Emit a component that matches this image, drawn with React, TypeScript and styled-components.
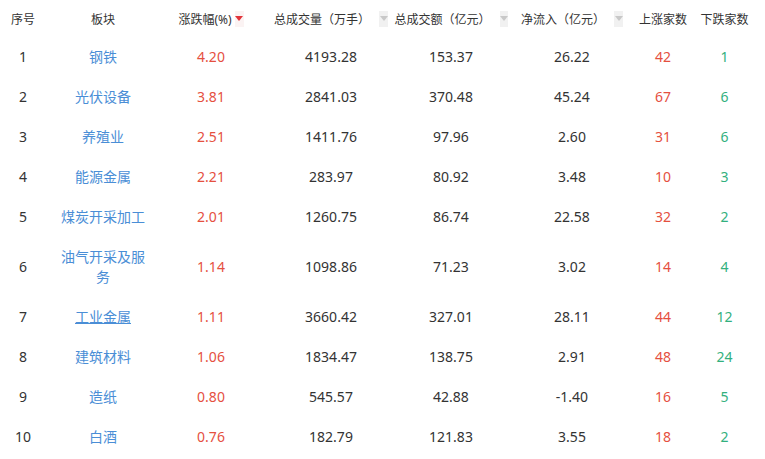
import React from "react";
import styled, { createGlobalStyle } from "styled-components";

const Global = createGlobalStyle`
  html, body { margin: 0; padding: 0; background: #fff; }
  body { font-family: "Noto Sans", "Noto Sans CJK SC", sans-serif; color: #333; }
`;

const COLS = "46px 114px 102px 138px 102px 140px 42px 81px";

const Table = styled.div`
  width: 765px;
  display: flex;
  flex-direction: column;
`;

const HeadRow = styled.div`
  display: grid;
  grid-template-columns: ${COLS};
  height: 37px;
  align-items: center;
`;

const HeadCell = styled.div`
  display: flex;
  justify-content: center;
  align-items: center;
  gap: 3px;
  font-size: 12px;
  color: #333;
  white-space: nowrap;
`;

const SortBox = styled.span<{ $active?: boolean }>`
  display: inline-flex;
  align-items: center;
  justify-content: center;
  width: 9px;
  height: 16px;
  margin-left: ${(p) => (p.$active ? "0" : "6px")};
  background: ${(p) => (p.$active ? "#fbf3f3" : "#f1f1f1")};
`;

const Triangle = styled.span<{ $active?: boolean }>`
  width: 0;
  height: 0;
  border-left: 4px solid transparent;
  border-right: 4px solid transparent;
  border-top: 5px solid ${(p) => (p.$active ? "#e2343a" : "#c8c8c8")};
`;

const Row = styled.div`
  display: grid;
  grid-template-columns: ${COLS};
  align-items: center;
  min-height: 40px;
`;

const Cell = styled.div<{ $tone?: "red" | "green" | "plain" }>`
  display: flex;
  justify-content: center;
  align-items: center;
  font-size: 14px;
  line-height: 20px;
  white-space: nowrap;
  color: ${(p) =>
    p.$tone === "red" ? "#e5503f" : p.$tone === "green" ? "#33b07e" : "#333"};
`;

const NameCell = styled.div`
  padding: 10px 10px;
  text-align: center;
  font-size: 14px;
  line-height: 20px;
`;

const NameLink = styled.a<{ $hover?: boolean }>`
  color: #4a8ed6;
  text-decoration: ${(p) => (p.$hover ? "underline" : "none")};
  cursor: pointer;
`;

type R = [string, string, string, string, string, string, string, string];

const rows: R[] = [
  ["1", "钢铁", "4.20", "4193.28", "153.37", "26.22", "42", "1"],
  ["2", "光伏设备", "3.81", "2841.03", "370.48", "45.24", "67", "6"],
  ["3", "养殖业", "2.51", "1411.76", "97.96", "2.60", "31", "6"],
  ["4", "能源金属", "2.21", "283.97", "80.92", "3.48", "10", "3"],
  ["5", "煤炭开采加工", "2.01", "1260.75", "86.74", "22.58", "32", "2"],
  ["6", "油气开采及服务", "1.14", "1098.86", "71.23", "3.02", "14", "4"],
  ["7", "工业金属", "1.11", "3660.42", "327.01", "28.11", "44", "12"],
  ["8", "建筑材料", "1.06", "1834.47", "138.75", "2.91", "48", "24"],
  ["9", "造纸", "0.80", "545.57", "42.88", "-1.40", "16", "5"],
  ["10", "白酒", "0.76", "182.79", "121.83", "3.55", "18", "2"],
];

const headers: { label: string; sort?: "active" | "idle" }[] = [
  { label: "序号" },
  { label: "板块" },
  { label: "涨跌幅(%)", sort: "active" },
  { label: "总成交量（万手）", sort: "idle" },
  { label: "总成交额（亿元）", sort: "idle" },
  { label: "净流入（亿元）", sort: "idle" },
  { label: "上涨家数" },
  { label: "下跌家数" },
];

export default function App() {
  return (
    <>
      <Global />
      <Table>
        <HeadRow>
          {headers.map((h) => (
            <HeadCell key={h.label}>
              {h.label}
              {h.sort && (
                <SortBox $active={h.sort === "active"}>
                  <Triangle $active={h.sort === "active"} />
                </SortBox>
              )}
            </HeadCell>
          ))}
        </HeadRow>
        {rows.map((r) => (
          <Row key={r[0]}>
            <Cell>{r[0]}</Cell>
            <NameCell>
              <NameLink $hover={r[0] === "7"}>{r[1]}</NameLink>
            </NameCell>
            <Cell $tone="red">{r[2]}</Cell>
            <Cell>{r[3]}</Cell>
            <Cell>{r[4]}</Cell>
            <Cell>{r[5]}</Cell>
            <Cell $tone="red">{r[6]}</Cell>
            <Cell $tone="green">{r[7]}</Cell>
          </Row>
        ))}
      </Table>
    </>
  );
}
